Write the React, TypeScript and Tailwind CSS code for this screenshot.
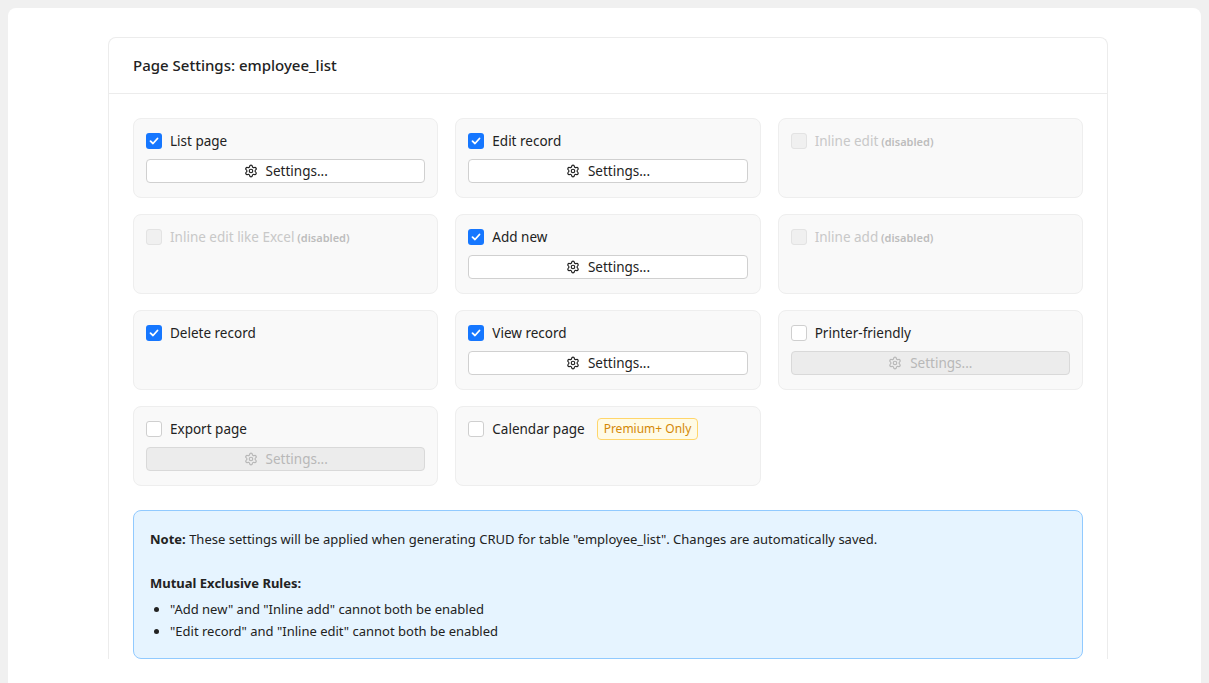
import { Settings } from 'lucide-react';

type Item = {
  label: string;
  checked?: boolean;
  disabled?: boolean;
  settings?: 'on' | 'off';
  premium?: boolean;
};

const items: Item[] = [
  { label: 'List page', checked: true, settings: 'on' },
  { label: 'Edit record', checked: true, settings: 'on' },
  { label: 'Inline edit', disabled: true },
  { label: 'Inline edit like Excel', disabled: true },
  { label: 'Add new', checked: true, settings: 'on' },
  { label: 'Inline add', disabled: true },
  { label: 'Delete record', checked: true },
  { label: 'View record', checked: true, settings: 'on' },
  { label: 'Printer-friendly', settings: 'off' },
  { label: 'Export page', settings: 'off' },
  { label: 'Calendar page', premium: true },
];

const Check = ({ checked, disabled }: { checked?: boolean; disabled?: boolean }) =>
  checked ? (
    <span className="flex h-4 w-4 items-center justify-center rounded-[3px] bg-[#1677ff]">
      <svg width="10" height="10" viewBox="0 0 10 10" fill="none">
        <path d="M1.5 5.2 L4 7.5 L8.5 2.5" stroke="white" strokeWidth="1.8" strokeLinecap="round" strokeLinejoin="round" />
      </svg>
    </span>
  ) : (
    <span className={`h-4 w-4 rounded-[3px] border ${disabled ? 'border-[#e3e3e3] bg-[#f0f0f0]' : 'border-[#cfcfcf] bg-white'}`} />
  );

export default function App() {
  return (
    <div className="min-h-[683px] bg-[#f0f0f0] p-2 pb-0 font-['Open_Sans','Noto_Sans',sans-serif] text-[13.5px] text-[#222]">
      <div className="min-h-[675px] rounded-t-lg bg-white pl-[100px] pr-[93px] pt-[29px]">
        <div className="rounded-t-lg border border-b-0 border-[#ececec]">
          <div className="flex h-[56px] items-center border-b border-[#ececec] px-6 text-[15px] font-medium">
            Page Settings: employee_list
          </div>
          <div className="px-6 pt-6">
            <div className="grid grid-cols-3 gap-x-[17px] gap-y-4">
              {items.map((it) => (
                <div key={it.label} className="h-[80px] rounded-lg border border-[#eeeeee] bg-[#f9f9f9] px-3 pt-3">
                  <div className="flex h-[20px] items-center gap-2">
                    <Check checked={it.checked} disabled={it.disabled} />
                    <span className={it.disabled ? 'text-[#c8c8c8]' : ''}>
                      {it.label}
                      {it.disabled && <span className="text-[11px] font-semibold text-[#bdbdbd]"> (disabled)</span>}
                    </span>
                    {it.premium && (
                      <span className="ml-1 rounded border border-[#ffd66b] bg-[#fffbe6] px-[6px] py-[1px] text-[12px] text-[#d48806]">
                        Premium+ Only
                      </span>
                    )}
                  </div>
                  {it.settings && (
                    <div
                      className={`mt-2 flex h-6 items-center justify-center gap-2 rounded border ${
                        it.settings === 'on' ? 'border-[#d0d0d0] bg-white text-[#222]' : 'border-[#d9d9d9] bg-[#ececec] text-[#b8b8b8]'
                      }`}
                    >
                      <Settings size={14} />
                      <span>Settings...</span>
                    </div>
                  )}
                </div>
              ))}
            </div>
            <div className="mt-6 rounded-lg border border-[#91caff] bg-[#e6f4ff] px-4 pb-4 pt-[17px] text-[13px] leading-[22px]">
              <p>
                <b>Note:</b> These settings will be applied when generating CRUD for table "employee_list". Changes are automatically saved.
              </p>
              <p className="mt-[22px] font-bold">Mutual Exclusive Rules:</p>
              <ul className="mt-1 list-disc pl-5">
                <li>"Add new" and "Inline add" cannot both be enabled</li>
                <li>"Edit record" and "Inline edit" cannot both be enabled</li>
              </ul>
            </div>
          </div>
        </div>
      </div>
    </div>
  );
}
